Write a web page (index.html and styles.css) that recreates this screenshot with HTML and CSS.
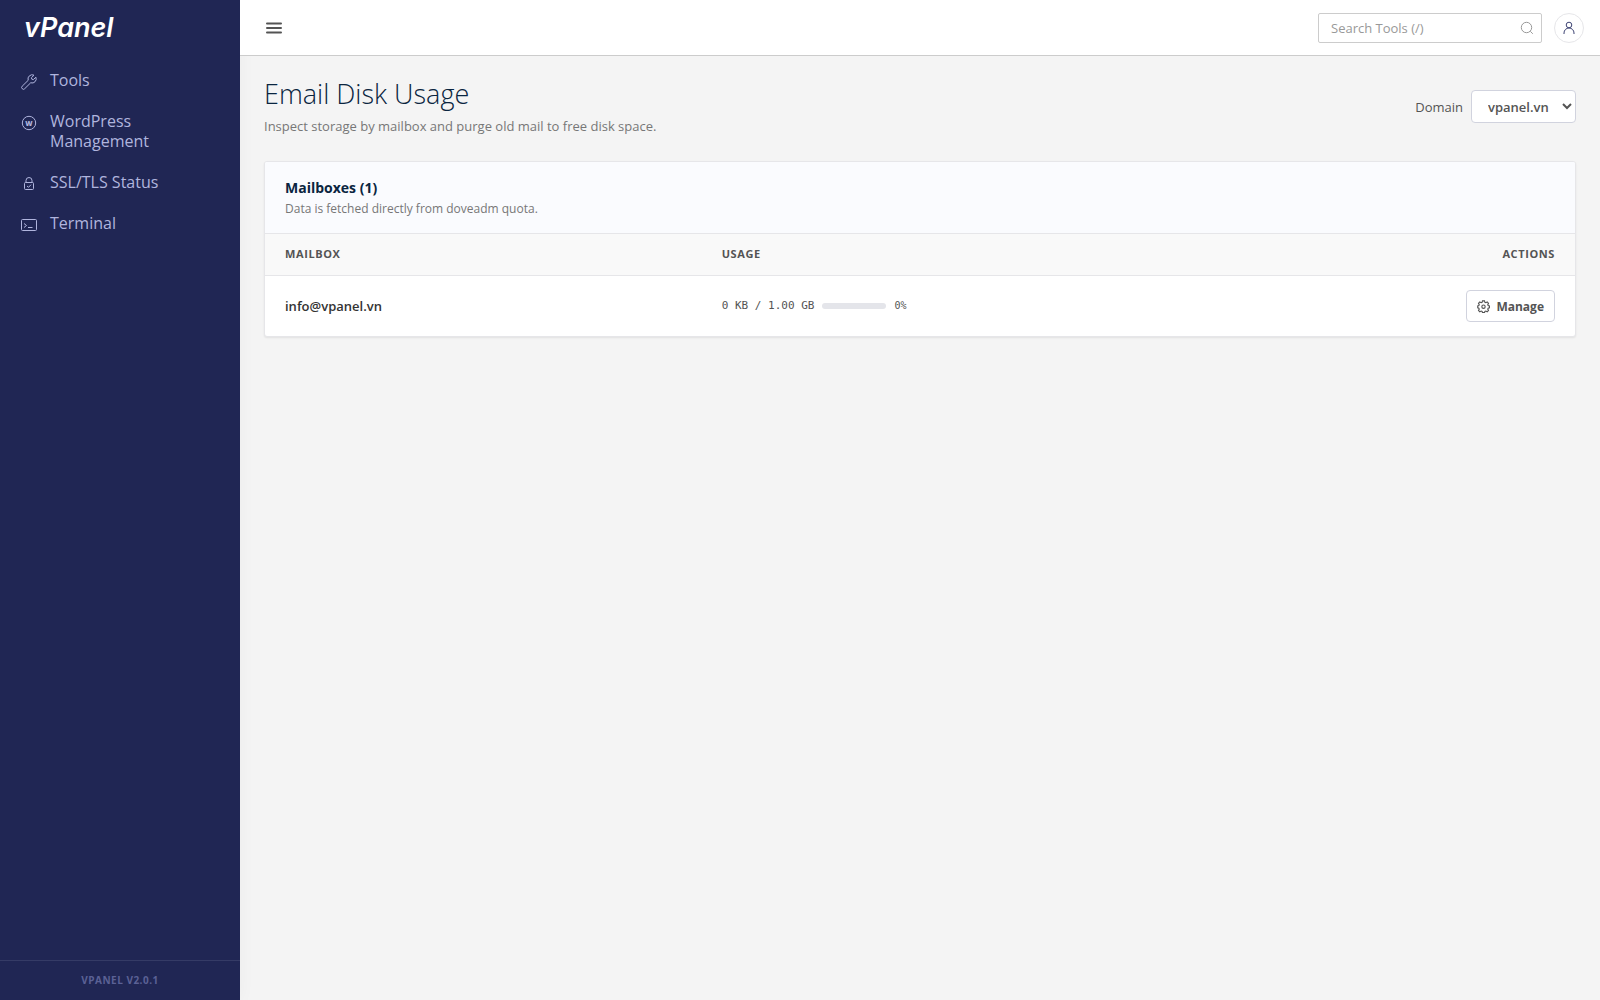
FILE: index.html
```html
<!DOCTYPE html>
<html lang="en">
<head>
    <meta charset="UTF-8">
    <meta name="viewport" content="width=device-width, initial-scale=1.0">
    <title>Email Disk Usage - vPanel</title>
    <link rel="stylesheet" href="styles.css">
</head>
<body>
    <aside class="sidebar">
        <a href="#" class="logo">vPanel</a>
        <nav class="menu">
            <a href="#" class="menu-item">
                <svg viewBox="0 0 16 16"><path d="M13 1.200A4.200 4.200 0 0 0 7.200 6.300L1.200 12.200a1.700 1.700 0 0 0 0 2.500 1.700 1.700 0 0 0 2.500 0L9.700 8.800A4.200 4.200 0 0 0 14.900 3.200L12.400 5.600 10.800 5.200 10.400 3.700z"/></svg>
                <span>Tools</span>
            </a>
            <a href="#" class="menu-item">
                <svg viewBox="0 0 16 16"><circle cx="8" cy="8" r="6.700"/><text x="8" y="10.500">W</text></svg>
                <span>WordPress Management</span>
            </a>
            <a href="#" class="menu-item">
                <svg viewBox="0 0 16 16"><path d="M5 6.500V4.500a3 3 0 0 1 6 0v2"/><rect x="3.500" y="6.500" width="9" height="7" rx="1"/><path d="M6 10l1.500 1.300L10 8.700"/></svg>
                <span>SSL/TLS Status</span>
            </a>
            <a href="#" class="menu-item">
                <svg viewBox="0 0 16 16"><rect x=".5" y="2.500" width="15" height="11" rx="1"/><path d="M3 6.500l2.500 2L3 10.500M7 10.500h4.500"/></svg>
                <span>Terminal</span>
            </a>
        </nav>
        <div class="version">VPANEL V2.0.1</div>
    </aside>

    <div class="main">
        <header class="topbar">
            <button type="button" class="menu-toggle" aria-label="Toggle menu">
                <svg viewBox="0 0 16 12"><path d="M1 1.500h14M1 6h14M1 10.500h14"/></svg>
            </button>
            <div class="topbar-right">
                <div class="search">
                    <input type="text" placeholder="Search Tools (/)" aria-label="Search Tools">
                    <svg viewBox="0 0 14 14"><circle cx="6.500" cy="6.500" r="5.200"/><path d="M10.300 10.300L12.800 12.800"/></svg>
                </div>
                <button type="button" class="user" aria-label="Account">
                    <svg viewBox="0 0 14 14"><circle cx="7" cy="4" r="2.800"/><path d="M2 13v-1a5 5 0 0 1 10 0v1"/></svg>
                </button>
            </div>
        </header>

        <main class="content">
            <div class="page-head">
                <div>
                    <h1>Email Disk Usage</h1>
                    <p>Inspect storage by mailbox and purge old mail to free disk space.</p>
                </div>
                <div class="domain">
                    <label for="domain">Domain</label>
                    <select id="domain">
                        <option>vpanel.vn</option>
                    </select>
                </div>
            </div>

            <section class="card">
                <div class="card-head">
                    <h2>Mailboxes (1)</h2>
                    <p>Data is fetched directly from doveadm quota.</p>
                </div>
                <table>
                    <thead>
                        <tr>
                            <th>MAILBOX</th>
                            <th>USAGE</th>
                            <th class="right">ACTIONS</th>
                        </tr>
                    </thead>
                    <tbody>
                        <tr>
                            <td class="mailbox">info@vpanel.vn</td>
                            <td>
                                <div class="usage">
                                    <span>0 KB / 1.00 GB</span>
                                    <div class="bar"></div>
                                    <span class="percent">0%</span>
                                </div>
                            </td>
                            <td class="right">
                                <button type="button" class="manage">
                                    <svg viewBox="0 0 14 14"><path d="M5.900 1h2.200l.4 1.500 1 .4 1.500-.8 1.400 1.400-.8 1.500.4 1 1.400.4v2l-1.400.4-.4 1 .8 1.500-1.400 1.400-1.500-.8-1 .4-.4 1.300H5.900l-.4-1.300-1-.4-1.500.8-1.400-1.400.8-1.500-.4-1L.8 8.400v-2L2 6l.4-1-.8-1.500L3 2.100l1.500.8 1-.4z"/><circle cx="7" cy="7.200" r="1.800"/></svg>
                                    Manage
                                </button>
                            </td>
                        </tr>
                    </tbody>
                </table>
            </section>
        </main>
    </div>
</body>
</html>
```
FILE: styles.css
```css
* {
    box-sizing: border-box;
}
body {
    margin: 0;
    display: flex;
    min-height: 100vh;
    background: #f4f4f4;
    color: #545454;
    font-family: "Open Sans", sans-serif;
    font-size: 13px;
    line-height: 20px;
}
h1, h2, p {
    margin: 0;
}
svg {
    flex: none;
    fill: none;
    stroke: currentColor;
}
button, input, select {
    font-family: inherit;
}

/* Sidebar */
.sidebar {
    display: flex;
    flex-direction: column;
    flex: none;
    width: 240px;
    background: #202654;
    box-shadow: 0 0 16px rgba(0, 0, 0, 0.04);
}
.logo {
    padding: 12px 24px 0;
    height: 60px;
    color: #fff;
    font-family: Inter, sans-serif;
    font-size: 27px;
    font-style: italic;
    font-weight: 600;
    line-height: 32px;
    text-decoration: none;
}
.menu {
    display: flex;
    flex: 1;
    flex-direction: column;
    gap: 1px;
}
.menu-item {
    display: flex;
    gap: 13px;
    padding: 10px 21px;
    color: #b0b5de;
    font-size: 16px;
    font-weight: 500;
    text-decoration: none;
}
.menu-item svg {
    width: 16px;
    height: 16px;
    margin-top: 4px;
}
.menu-item text {
    fill: currentColor;
    stroke: none;
    font-size: 7px;
    font-weight: 800;
    text-anchor: middle;
}
.version {
    padding: 10px;
    border-top: 1px solid #353b66;
    color: #5b6195;
    font-size: 10px;
    font-weight: 700;
    letter-spacing: 0.5px;
    line-height: 19px;
    text-align: center;
}

/* Top bar */
.main {
    flex: 1;
    min-width: 0;
}
.topbar {
    display: flex;
    align-items: center;
    justify-content: space-between;
    height: 56px;
    padding: 0 16px 0 26px;
    background: #fff;
    border-bottom: 1px solid #ccc;
}
.menu-toggle {
    display: flex;
    padding: 0;
    border: 0;
    background: none;
    color: #545454;
}
.menu-toggle svg {
    width: 16px;
    height: 12px;
    stroke-width: 2;
    stroke-linecap: round;
}
.topbar-right {
    display: flex;
    gap: 12px;
}
.search {
    display: flex;
    align-items: center;
    width: 224px;
    height: 30px;
    padding: 0 7px 0 12px;
    border: 1px solid #ccc;
    border-radius: 2px;
    color: #999;
}
.search input {
    flex: 1;
    min-width: 0;
    padding: 0;
    border: 0;
    outline: 0;
    font-size: 13px;
}
.search input::placeholder {
    color: #999;
}
.search svg {
    width: 14px;
    height: 14px;
}
.user {
    display: flex;
    align-items: center;
    justify-content: center;
    width: 30px;
    height: 30px;
    padding: 0;
    border: 1px solid #e6e6e9;
    border-radius: 50%;
    background: #fff;
    color: #3d4373;
}
.user svg {
    width: 14px;
    height: 14px;
}

/* Page */
.content {
    padding: 20px 24px;
}
.page-head {
    display: flex;
    align-items: center;
    justify-content: space-between;
    margin-bottom: 24px;
}
h1 {
    margin-bottom: 4px;
    color: #0a2540;
    font-size: 27px;
    font-weight: 300;
    line-height: 36px;
}
.page-head p {
    color: #777;
    line-height: 21px;
}
.domain {
    display: flex;
    align-items: center;
    gap: 8px;
}
.domain select {
    height: 33px;
    padding: 0 10px 0 12px;
    border: 1px solid #d1d3de;
    border-radius: 4px;
    background: #fff;
    color: #545454;
    font-size: 13px;
    font-weight: 600;
}

/* Mailbox table */
.card {
    overflow: hidden;
    border: 1px solid #e6e6e9;
    border-radius: 3px;
    background: #fff;
    box-shadow: 0 1px 2px rgba(0, 0, 0, 0.08);
}
.card-head {
    padding: 16px 20px 14px;
    border-bottom: 1px solid #e6e6e9;
    background: #fafbfe;
}
h2 {
    margin-bottom: 1px;
    color: #0a2540;
    font-size: 14px;
    font-weight: 700;
    line-height: 20px;
}
.card-head p {
    color: #777;
    font-size: 12px;
}
table {
    width: 100%;
    table-layout: fixed;
    border-collapse: collapse;
}
th {
    padding: 10px 20px 11px;
    border-bottom: 1px solid #e6e6e9;
    background: #f9f9f9;
    font-size: 11px;
    font-weight: 700;
    letter-spacing: 0.6px;
    text-align: left;
}
td {
    padding: 14px 20px;
}
.right {
    text-align: right;
}
.mailbox {
    color: #333;
    font-weight: 600;
}
.usage {
    display: flex;
    align-items: center;
    gap: 8px;
    font-family: "DejaVu Sans Mono", monospace;
    font-size: 11px;
}
.percent {
    font-size: 10px;
}
.bar {
    width: 64px;
    height: 6px;
    border-radius: 3px;
    background: #e4e5ea;
}
.manage {
    display: inline-flex;
    align-items: center;
    gap: 6px;
    height: 32px;
    padding: 0 10px;
    border: 1px solid #d1d3de;
    border-radius: 4px;
    background: #fff;
    color: #545454;
    font-size: 12px;
    font-weight: 700;
    vertical-align: top;
}
.manage svg {
    width: 13px;
    height: 13px;
    stroke-width: 1.2px;
}
```
